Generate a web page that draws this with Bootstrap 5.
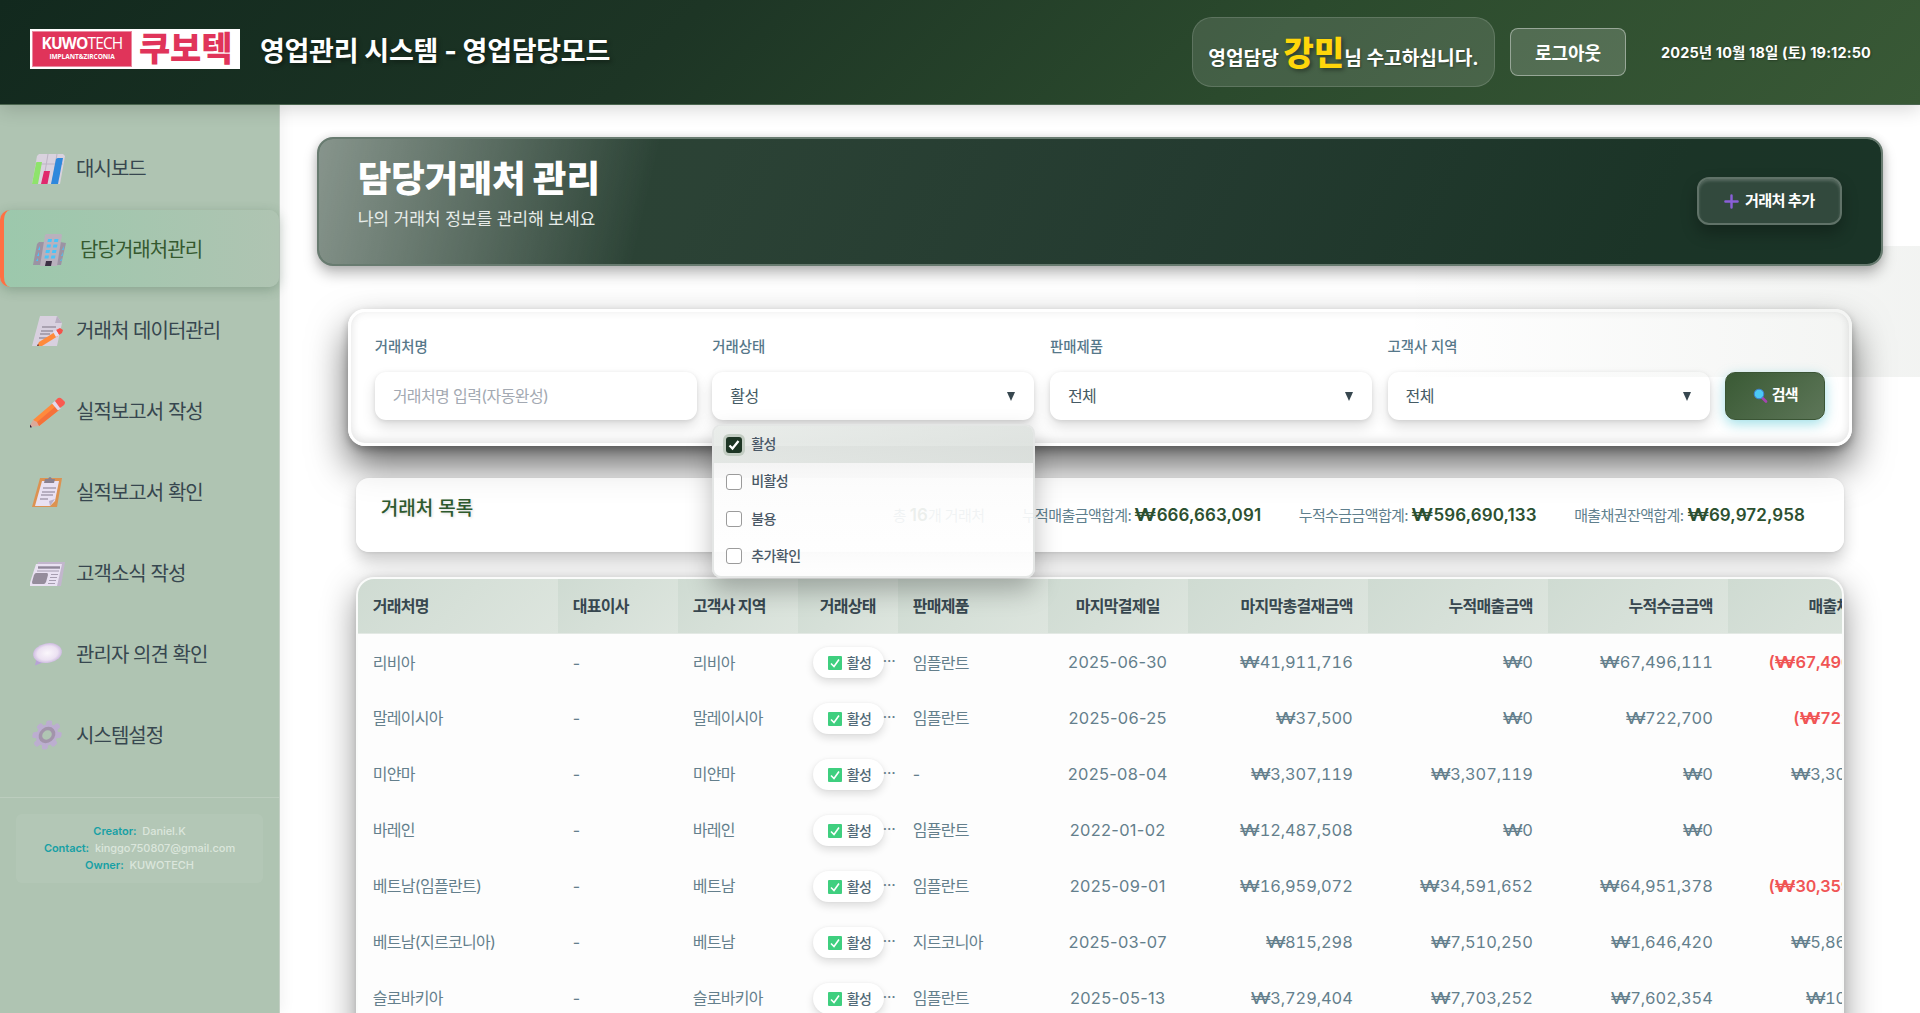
<!DOCTYPE html>
<html lang="ko">
<head>
<meta charset="utf-8">
<meta name="viewport" content="width=device-width, initial-scale=1">
<title>영업관리 시스템 - 영업담당모드</title>
<link href="https://cdn.jsdelivr.net/npm/bootstrap@5.3.0/dist/css/bootstrap.min.css" rel="stylesheet">
<style>
body{font-family:Inter,"Noto Sans CJK KR",sans-serif;height:1013px;overflow:hidden;background:#fff;color:#37474f;line-height:1.2}
.topbar{height:105px;background:linear-gradient(135deg,#12291e 0%,#1d3525 35%,#2b4a2d 65%,#395936 100%);border-bottom:1px solid #4b6650;box-shadow:0 4px 18px rgba(0,0,0,.16);position:relative;z-index:20;color:#fff;padding:0 49px 0 30px}
.logo-box{width:210px;height:40px;background:#fff;padding:0 3px;margin:-7px 20px 0 0}
.logo-en{width:98px;height:34px;background:#e0345a;line-height:1;box-shadow:0 0 0 1px #ea8ba0}
.logo-en .l1{font:15.5px/17px "Open Sans","Liberation Sans",sans-serif;letter-spacing:-.85px;white-space:nowrap}
.logo-en .l2{font:bold 6.6px/10px "Open Sans",sans-serif;letter-spacing:-.1px;white-space:nowrap}
.logo-ko{font-size:34px;font-weight:900;color:#e0345a;line-height:38px;letter-spacing:-.2px}
.sys-title{font-size:27px;font-weight:700;letter-spacing:-.28px;text-shadow:2px 2px 4px rgba(0,0,0,.4);white-space:nowrap}
.user-pill{width:303px;height:70px;border-radius:20px;background:rgba(255,255,255,.12);border:1px solid rgba(255,255,255,.14);font-size:19.200px;font-weight:700;white-space:nowrap;text-shadow:1px 1px 2px rgba(0,0,0,.35);margin-right:15px;padding-top:3px}
.user-pill b{font-size:33px;font-weight:900;color:#ffd60a;line-height:1;text-shadow:2px 2px 4px rgba(0,0,0,.4)}
.btn-out{width:116px;height:48px;border-radius:8px;background:rgba(255,255,255,.17);border:1px solid rgba(255,255,255,.4);font-size:18px;font-weight:700;color:#fff;padding:2px 0 0;margin-right:35px}
.clock{font-size:14.5px;font-weight:700;letter-spacing:.12px;white-space:nowrap;padding-top:2px;text-shadow:1px 1px 2px rgba(0,0,0,.3)}
.sidebar{width:280px;height:908px;background:#afc4b2;border-right:1px solid #c3d0c5;padding-top:24px;box-shadow:2px 0 14px rgba(0,0,0,.06);flex:none}
.side-link{height:77px;margin-bottom:4px;padding:2px 0 0 30px;font-size:20px;letter-spacing:-.95px;color:#37474f;white-space:nowrap;font-weight:400}
.side-link svg{width:36px;height:36px;margin-right:10px;flex:none}
.side-link.active{border-left:4px solid #ff7043;border-radius:10px;background:linear-gradient(90deg,#9cc8ac,#afc4b2);box-shadow:0 3px 12px rgba(40,80,50,.28);color:#35592f;padding-left:27px}
.side-link.active svg{margin-right:13px}
.side-foot{border-top:1px solid #bccdbe;margin-top:24px;padding:16px 16px 0}
.side-foot>div{height:69px;border-radius:6px;background:rgba(255,255,255,.06);font-size:11px;line-height:17px;padding-top:9px;color:#dbe6dc;text-align:center;letter-spacing:-.05px;font-weight:500}
.side-foot b{color:#17a0a5;font-weight:600;margin-right:3px}
.main-area{padding:32px 37.3px 0 36.7px;position:relative;overflow:hidden;height:908px;min-width:0}
.main-area::after{content:"";position:absolute;right:0;top:141px;width:520px;height:131px;background:linear-gradient(90deg,rgba(60,80,55,0),rgba(60,80,55,.065));pointer-events:none}
.hero{height:129px;border-radius:16px;border:2px solid #687b70;background:linear-gradient(103deg,rgba(255,255,255,.43) 0,rgba(255,255,255,.22) 11%,rgba(255,255,255,.02) 20.7%,rgba(255,255,255,0) 21.5%) padding-box,linear-gradient(115deg,#2c4435 0%,#2b4235 25%,#243b30 55%,#1b3427 85%,#1a3427 100%) padding-box,#687b70;box-shadow:0 8px 14px rgba(0,0,0,.26),0 0 8px rgba(0,0,0,.12);color:#fff;padding:0 39px 0 39px;position:relative;z-index:1}
.hero-text{margin-top:-15px}
.hero h1{font-size:36.500px;font-weight:900;line-height:40px;margin:0 0 9px;white-space:nowrap;letter-spacing:0}
.hero p{font-size:17.2px;line-height:22px;margin:0;color:#e6ebe8;letter-spacing:-.18px}
.btn-new{width:145px;height:48px;border-radius:12px;border:2px solid #607268;background:#32493d;color:#fff;font-weight:700;font-size:15.2px;letter-spacing:-.65px;padding:2px 0 0;margin-top:-2px;box-shadow:0 8px 16px rgba(0,0,0,.28),inset 0 2px 3px rgba(255,255,255,.18)}
.btn-new svg{margin-right:6px}
.btn-new:hover{background:#32493d;color:#fff}
.filter-box{column-gap:15.5px;margin:43px 31px 0 31.500px;height:136.5px;border-radius:17px;border:3px solid rgba(255,255,255,.75);background:rgba(255,255,255,.93);padding:25px 23.500px 0 23.500px;box-shadow:0 20px 38px rgba(0,0,0,.6),0 4px 9px rgba(0,0,0,.26),inset 0 0 10px rgba(0,0,0,.07),inset 0 -5px 10px rgba(0,0,0,.06)}
.flt{flex:1 1 0;position:relative}
.flt>label{display:block;font-size:14.4px;line-height:20px;height:19px;margin-bottom:16px;color:#56788a;font-weight:500}
.fld{height:47.5px;border-radius:11px;background:#fff;box-shadow:0 7px 14px rgba(0,0,0,.13),0 1px 4px rgba(0,0,0,.1);padding:2px 19px 0 18px;font-size:16px;letter-spacing:-.6px;color:#455a64}
.fld.ph{color:#a3a9b2}
.tri{width:0;height:0;border:4.5px solid transparent;border-top:9px solid #37474f;border-bottom:0}
.btn-find{width:100px;height:48px;border-radius:10px;margin-top:34.5px;background:linear-gradient(135deg,#3a5a35,#5d7658);border:1px solid #3a5535;color:#fff;font-weight:700;font-size:15px;letter-spacing:-.8px;padding:0;box-shadow:0 4px 13px rgba(0,172,193,.38)}
.drop{position:absolute;left:0;top:87px;width:322.5px;height:154px;z-index:10;border-radius:9px;border:2px solid #e4e6e5;background:linear-gradient(rgba(250,250,250,.9),rgba(255,255,255,.93));box-shadow:0 12px 26px rgba(0,0,0,.26);overflow:hidden}
.opt{height:37.2px;padding-left:12px;font-size:14px;font-weight:500;letter-spacing:-.6px;color:#4a5866;gap:9px}
.opt.on{background:linear-gradient(165deg,rgba(220,226,221,.55),rgba(205,212,207,.65))}
.cbx{width:16px;height:16px;border:1.5px solid #9b9b9b;border-radius:3px;background:#fff}
.opt.on .cbx{background:#1d3524;border:0;box-shadow:0 0 0 3px #c3cdc3}
.list-head{margin:32.5px 38.7px 0 39px;height:74px;border-radius:13px;background:rgba(255,255,255,.74);box-shadow:0 9px 16px rgba(0,0,0,.2),0 1px 3px rgba(0,0,0,.08);padding:0 39px 0 25px}
.list-head h2{font-size:19px;font-weight:500;color:#2d5a2d;margin:0 0 12px;text-shadow:1px 1px 3px rgba(0,0,0,.15)}
.stat{font-size:15px;letter-spacing:-.6px;color:#5f7f8d;white-space:nowrap;padding-top:1px;margin-left:37.500px}
.stat b{font-size:17px;font-weight:600;color:#2c5030;letter-spacing:.1px;margin-left:0}
.won{display:inline-block;transform:scaleX(1.28);transform-origin:right;margin-left:4.5px}
.tbl-box{margin:25px 39px 0 39px;height:460px;border:2px solid #fafbfa;border-bottom:0;border-radius:18px 18px 0 0;overflow:hidden;box-shadow:0 12px 34px rgba(0,0,0,.42),0 0 6px rgba(0,0,0,.1);background:#fdfdfd}
.tbl{table-layout:fixed;width:1550px;border-collapse:collapse;font-size:16px;letter-spacing:-.7px;color:#647f8c;white-space:nowrap}
.tbl th{height:54px;padding:2px 15px 0;font-weight:700;color:#37474f;background:linear-gradient(135deg,#cfdbd2,#dde5de);border-bottom:1px solid #e3e9e4}
.tbl td{height:56px;padding:4px 15px 0}
.tbl td.num{font-size:16.400px;letter-spacing:-.08px;font-variant-numeric:tabular-nums}
.num{text-align:right}
.ctr{text-align:center}
.tbl td.ctr{font-size:16.400px;letter-spacing:.3px}
.tbl td.neg{color:#f05555;font-weight:600;letter-spacing:-.25px}
.tbl td.st{padding:3px 0 0 15px}
.pill{display:inline-flex;align-items:center;width:71px;height:31px;border-radius:16px;background:#fff;box-shadow:0 4px 8px rgba(0,0,0,.13),0 0 3px rgba(0,0,0,.05);font-size:14px;font-weight:500;letter-spacing:-.6px;color:#536b78;padding:1px 0 0 15px;vertical-align:middle}
.pill svg{margin-right:5px}
.dots{font-size:13.500px;font-weight:600;vertical-align:5px;letter-spacing:0;margin-left:-1px;line-height:1}
</style>
<script src="https://cdn.jsdelivr.net/npm/bootstrap@5.3.0/dist/js/bootstrap.bundle.min.js"></script>
</head>
<body class="d-flex flex-column">
<header class="topbar d-flex align-items-center flex-shrink-0">
  <div class="logo-box d-flex align-items-center">
    <div class="logo-en d-flex flex-column justify-content-center align-items-center"><div class="l1"><b>KUWO</b>TECH</div><div class="l2">IMPLANT&amp;ZIRCONIA</div></div>
    <div class="logo-ko ms-2">쿠보텍</div>
  </div>
  <div class="sys-title me-auto">영업관리 시스템 - 영업담당모드</div>
  <div class="user-pill d-flex align-items-center justify-content-center"><span>영업담당 <b>강민</b>님 수고하십니다.</span></div>
  <button class="btn btn-out">로그아웃</button>
  <div class="clock">2025년 10월 18일 (토) 19:12:50</div>
</header>
<div class="d-flex">
<aside class="sidebar">
  <nav>
    <a class="side-link d-flex align-items-center text-decoration-none"><svg viewBox="0 0 36 36"><path d="M9 3h24l2 2-5 28H2L7 5z" fill="#d9d2de"/><path d="M18 3l-5 30M27 3l-5 30M5 13h28" stroke="#bdb4c4" stroke-width="1"/><path d="M6 12q0-1 1-1h5l-4 22H2z" fill="#8ee36b"/><path d="M14 20h6l-2.500 13h-6.500z" fill="#e0296d"/><path d="M26 8q1-1 2-1h5l-5 26h-7z" fill="#2e88dc"/></svg>대시보드</a>
    <a class="side-link active d-flex align-items-center text-decoration-none"><svg viewBox="0 0 36 36"><path d="M8 10h21l6 1-5 22H2l4-21z" fill="#9b93a3"/><path d="M14 3q1-1 2-1h14l1 1-5 31H9z" fill="#b9b1bd"/><g fill="#4cc3f7"><path d="M17 7h4l-.6 3h-4zM23.500 7h4l-.6 3h-4zM16 12.500h4l-.6 3h-4zM22.500 12.500h4l-.6 3h-4zM15 18h4l-.6 3h-4zM21.500 18h4l-.6 3h-4zM14 23.500h4l-.6 3h-4zM20.500 23.500h4l-.6 3h-4z"/><path d="M9 14l-2 4h2zM8 20l-2 4h2zM7 26l-2 3h2zM33 14l-2 4h1.500zM32 20l-2 4h1.500zM31 26l-2 3h1.500z"/></g><path d="M15 29h6l-1 5h-6z" fill="#3c3044"/></svg>담당거래처관리</a>
    <a class="side-link d-flex align-items-center text-decoration-none"><svg viewBox="0 0 36 36"><path d="M10 3h17l5 7-5 23H2z" fill="#d8d0df"/><path d="M27 3l-2 7h7z" fill="#b9afc2"/><path d="M12 14h14M11 18h12M10 21h10M9 25h8" stroke="#9a92a3" stroke-width="1.400"/><path d="M7 33l2-4 16-10 3 4-16 10z" fill="#ff8a3c"/><path d="M26 17l4-2 3 2-1 3-3 2z" fill="#f4524a"/><path d="M23 19l3-2 3 5-3 2z" fill="#e8dff0"/><path d="M7 33l1-2 1 1.500z" fill="#3a2040"/></svg>거래처 데이터관리</a>
    <a class="side-link d-flex align-items-center text-decoration-none"><svg viewBox="0 0 36 36"><path d="M3 26L23 9l6 7L9 32z" fill="#ff8a3c"/><path d="M6 29L26 12l3 4L9 32z" fill="#f5713a"/><path d="M3 26L-1 33l10-1-2-4z" fill="#dba99a"/><path d="M22 9.500l3-2.500 6 7-3 2.500z" fill="#e4d9ec"/><path d="M25 7l3-3q2-1 4 1l3 3q0 2-1 3l-4 3z" fill="#fa5a50"/><path d="M0 30.500l-1 3 3-.3z" fill="#35203c"/></svg>실적보고서 작성</a>
    <a class="side-link d-flex align-items-center text-decoration-none"><svg viewBox="0 0 36 36"><path d="M10 3h22l-5 29H2z" fill="#dc9251"/><path d="M12 6h17l-4 20-5 5H5z" fill="#e9e1f2"/><path d="M25 24l-5 7 -1-5z" fill="#b9aec9"/><path d="M13 13h13M12 17h13M11 20h12M10 24h8" stroke="#a69db0" stroke-width="1.300"/><path d="M15 4h3q2-4 4 0h3l-1 4H14z" fill="#8a8190"/></svg>실적보고서 확인</a>
    <a class="side-link d-flex align-items-center text-decoration-none"><svg viewBox="0 0 36 36"><path d="M8 6h27l-4 24H5z" fill="#c2b6cd"/><path d="M6 8h26l-5 22H-1z" fill="#e9e1f2"/><path d="M8 11.500h22" stroke="#8f8699" stroke-width="2.400"/><path d="M7 15h22M21 18.500h7M20 21.500h7M19 24.500h7M18 27.500h7" stroke="#a69db0" stroke-width="1.200"/><path d="M6 17h11q1 0 1 2l-2 7q-1 2-2 2H3q-1 0-1-2l2-7q1-2 2-2z" fill="#958c9c"/></svg>고객소식 작성</a>
    <a class="side-link d-flex align-items-center text-decoration-none"><svg viewBox="0 0 36 36"><defs><radialGradient id="bub"><stop offset="0" stop-color="#fbf7fc"/><stop offset=".7" stop-color="#ece2f2"/><stop offset="1" stop-color="#cfbde2"/></radialGradient></defs><path d="M7 19L5 28.500 14 25z" fill="#b7a3d6"/><ellipse cx="17.500" cy="16" rx="14.500" ry="9.800" transform="rotate(-10 18 16)" fill="url(#bub)"/></svg>관리자 의견 확인</a>
    <a class="side-link d-flex align-items-center text-decoration-none"><svg viewBox="0 0 36 36"><g transform="translate(17 17) skewX(-10)"><g fill="#bcaed0"><rect x="-3" y="-14.500" width="6" height="29" rx="2"/><rect x="-3" y="-14.500" width="6" height="29" rx="2" transform="rotate(45)"/><rect x="-3" y="-14.500" width="6" height="29" rx="2" transform="rotate(90)"/><rect x="-3" y="-14.500" width="6" height="29" rx="2" transform="rotate(135)"/><circle r="10.800"/></g><circle r="6.500" fill="#b0c5b3" stroke="#a294ab" stroke-width="3.500"/></g></svg>시스템설정</a>
  </nav>
  <div class="side-foot"><div><b>Creator:</b> Daniel.K<br><b>Contact:</b> kinggo750807@gmail.com<br><b>Owner:</b> KUWOTECH</div></div>
</aside>
<main class="main-area flex-grow-1">
  <section class="hero d-flex align-items-center justify-content-between">
    <div class="hero-text"><h1>담당거래처 관리</h1><p>나의 거래처 정보를 관리해 보세요</p></div>
    <button class="btn btn-new d-inline-flex align-items-center justify-content-center"><svg width="15" height="15" viewBox="0 0 16 16"><path d="M8 1.500v13M1.500 8h13" stroke="#8a5fd8" stroke-width="2.600" stroke-linecap="round"/></svg>거래처 추가</button>
  </section>
  <section class="filter-box d-flex">
    <div class="flt"><label>거래처명</label><div class="fld ph d-flex align-items-center">거래처명 입력(자동완성)</div></div>
    <div class="flt"><label>거래상태</label><div class="fld d-flex align-items-center justify-content-between">활성<i class="tri"></i></div>
      <div class="drop">
        <div class="opt on d-flex align-items-center"><span class="cbx d-flex"><svg width="16" height="16" viewBox="0 0 16 16"><path d="M3.500 8.500l3 3 6-7.500" fill="none" stroke="#fff" stroke-width="2.300"/></svg></span>활성</div>
        <div class="opt d-flex align-items-center"><span class="cbx"></span>비활성</div>
        <div class="opt d-flex align-items-center"><span class="cbx"></span>불용</div>
        <div class="opt d-flex align-items-center"><span class="cbx"></span>추가확인</div>
      </div>
    </div>
    <div class="flt"><label>판매제품</label><div class="fld d-flex align-items-center justify-content-between">전체<i class="tri"></i></div></div>
    <div class="flt"><label>고객사 지역</label><div class="fld d-flex align-items-center justify-content-between">전체<i class="tri"></i></div></div>
    <button class="btn btn-find d-inline-flex align-items-center justify-content-center"><svg width="15" height="15" viewBox="0 0 15 15" class="me-1"><path d="M9.500 10l3.500 3.500" stroke="#a544b0" stroke-width="2.600" stroke-linecap="round"/><circle cx="6" cy="6" r="4.800" fill="#4cc9f5" stroke="#3f7fd0"/></svg>검색</button>
  </section>
  <section class="list-head d-flex align-items-center">
    <h2 class="me-auto">거래처 목록</h2>
    <div class="stat">총 <b class="m-0">16</b>개 거래처</div>
    <div class="stat">누적매출금액합계: <b><span class="won">₩</span>666,663,091</b></div>
    <div class="stat">누적수금금액합계: <b><span class="won">₩</span>596,690,133</b></div>
    <div class="stat">매출채권잔액합계: <b><span class="won">₩</span>69,972,958</b></div>
  </section>
  <section class="tbl-box">
    <table class="tbl">
      <colgroup><col style="width:200px"><col style="width:120px"><col style="width:120px"><col style="width:100px"><col style="width:150px"><col style="width:140px"><col style="width:180px"><col style="width:180px"><col style="width:180px"><col style="width:180px"></colgroup>
      <thead><tr><th>거래처명</th><th>대표이사</th><th>고객사 지역</th><th class="ctr">거래상태</th><th>판매제품</th><th class="ctr">마지막결제일</th><th class="num">마지막총결재금액</th><th class="num">누적매출금액</th><th class="num">누적수금금액</th><th class="num">매출채권잔액</th></tr></thead>
      <tbody id="rows"></tbody>
    </table>
  </section>
</main>
</div>
<script>
const rows = [
  ['리비아','리비아','임플란트','2025-06-30','₩41,911,716','₩0','₩67,496,111','(₩67,496,111)'],
  ['말레이시아','말레이시아','임플란트','2025-06-25','₩37,500','₩0','₩722,700','(₩722,700)'],
  ['미얀마','미얀마','-','2025-08-04','₩3,307,119','₩3,307,119','₩0','₩3,307,119'],
  ['바레인','바레인','임플란트','2022-01-02','₩12,487,508','₩0','₩0','₩0'],
  ['베트남(임플란트)','베트남','임플란트','2025-09-01','₩16,959,072','₩34,591,652','₩64,951,378','(₩30,359,726)'],
  ['베트남(지르코니아)','베트남','지르코니아','2025-03-07','₩815,298','₩7,510,250','₩1,646,420','₩5,863,830'],
  ['슬로바키아','슬로바키아','임플란트','2025-05-13','₩3,729,404','₩7,703,252','₩7,602,354','₩100,898']
];
const badge = '<span class="pill"><svg width="14" height="14" viewBox="0 0 14 14"><rect width="14" height="14" rx="1" fill="#3fcf7f"/><path d="M3 7.500l3 3 5-7" fill="none" stroke="#fff" stroke-width="1.600"/></svg>활성</span><span class="dots">…</span>';
const won = s => s.replace('₩', '<span class="won">₩</span>');
document.getElementById('rows').innerHTML = rows.map(r =>
  `<tr><td>${r[0]}</td><td>-</td><td>${r[1]}</td><td class="st">${badge}</td><td>${r[2]}</td><td class="ctr">${r[3]}</td><td class="num">${won(r[4])}</td><td class="num">${won(r[5])}</td><td class="num">${won(r[6])}</td><td class="num${r[7][0] === '(' ? ' neg' : ''}">${won(r[7])}</td></tr>`).join('');
</script>
</body>
</html>
